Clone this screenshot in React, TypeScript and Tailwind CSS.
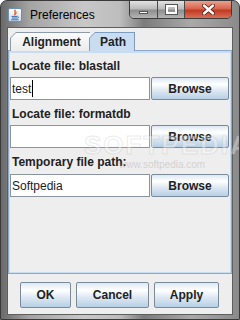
import React from "react";

const font = { fontFamily: '"Liberation Sans", Arial, sans-serif' };

function JavaIcon() {
  return (
    <svg width="14" height="14" viewBox="0 0 14 14">
      <defs>
        <linearGradient id="jg" x1="0" y1="0" x2="0" y2="1">
          <stop offset="0" stopColor="#ffffff" />
          <stop offset="1" stopColor="#c9dcef" />
        </linearGradient>
      </defs>
      <rect x="0.5" y="0.5" width="13" height="13" rx="1.5" fill="url(#jg)" stroke="#6f8fb3" />
      <path d="M7.5 1.8 C5.2 3.6 9.2 4.6 6.4 7.2" stroke="#e0542a" strokeWidth="1.4" fill="none" />
      <path d="M9 3.4 C8 4.4 9.4 5 8.2 6.3" stroke="#f08a3a" strokeWidth="1" fill="none" />
      <path d="M3.5 8.4 h6" stroke="#3d6fa6" strokeWidth="1" />
      <path d="M4 10 h5" stroke="#3d6fa6" strokeWidth="1" />
      <path d="M3 11.8 h7.5" stroke="#3d6fa6" strokeWidth="1" />
      <path d="M9.6 8.3 q2 .6 -.2 2.2" stroke="#3d6fa6" strokeWidth="1" fill="none" />
    </svg>
  );
}

function Btn({ w, children }: { w: string; children: React.ReactNode }) {
  return (
    <div
      className={`${w} h-full flex items-center justify-center border border-[#7a8a99] rounded-[2px] bg-[linear-gradient(to_bottom,#dde8f3_0%,#ffffff_30%,#dde8f3_60%,#b8cfe5_100%)] text-[12px] font-bold text-[#222]`}
    >
      {children}
    </div>
  );
}

function Field({ value, caret }: { value: string; caret?: boolean }) {
  return (
    <div className="flex h-[23px] gap-[1px]">
      <div className="w-[140px] h-full bg-white border border-[#8a94a0] flex items-center pl-[1px] text-[12px] text-[#1a1a2a]">
        <span>{value}</span>
        {caret && <span className="w-[1px] h-[17px] bg-black ml-[1px]" />}
      </div>
      <div className="w-[78px] h-full">
        <Btn w="w-full">Browse</Btn>
      </div>
    </div>
  );
}

export default function App() {
  return (
    <div
      className="w-[240px] h-[320px] flex flex-col border border-[#3a3a3a] rounded-t-[7px] overflow-hidden bg-[linear-gradient(to_right,#6a6a6a_0%,#a4a4a4_12%,#c8c8c8_35%,#bdbdbd_50%,#7c7c7c_60%,#a9a9a9_80%,#8a8a8a_100%)]"
      style={font}
    >
      {/* Title bar */}
      <div className="h-[26px] flex items-start shrink-0">
        <div className="ml-[7px] mt-[7px]">
          <JavaIcon />
        </div>
        <div className="ml-[8px] mt-[7px] text-[12px] leading-[14px] text-black">Preferences</div>
        <div className="ml-auto mr-[7px] flex h-[19px] -mt-px border border-[#3c3c3c] rounded-b-[5px] overflow-hidden">
          <div className="w-[28px] h-full border-r border-[#4a4a4a] bg-[linear-gradient(to_bottom,#e2e2e2_0%,#bcbcbc_45%,#8e8e8e_55%,#b4b4b4_100%)] flex items-center justify-center">
            <div className="w-[9px] h-[3px] bg-white border border-[#555] mt-[5px]" />
          </div>
          <div className="w-[27px] h-full border-r border-[#4a4a4a] bg-[linear-gradient(to_bottom,#e2e2e2_0%,#bcbcbc_45%,#8e8e8e_55%,#b4b4b4_100%)] flex items-center justify-center">
            <div className="w-[11px] h-[9px] border-[2px] border-white outline outline-1 outline-[#555]">
            </div>
          </div>
          <div className="w-[46px] h-full bg-[linear-gradient(to_bottom,#eaa08f_0%,#d8654e_45%,#c23a22_55%,#d8705a_100%)] flex items-center justify-center">
            <svg width="13" height="11" viewBox="0 0 13 11">
              <path d="M2 1.5 L11 9.5 M11 1.5 L2 9.5" stroke="#5a1a10" strokeWidth="4" strokeLinecap="round" />
              <path d="M2 1.5 L11 9.5 M11 1.5 L2 9.5" stroke="#ffffff" strokeWidth="2.4" strokeLinecap="round" />
            </svg>
          </div>
        </div>
      </div>

      {/* Client area */}
      <div className="mx-[6px] h-[288px] border border-[#5e5e5e] bg-[#eeeeee] flex flex-col relative">
        {/* Tab strip */}
        <div className="h-[23px] pt-[4px] pl-[2px] flex items-end relative z-10 -mb-px">
          <div className="relative w-[80px] h-[19px] bg-[#8c9aab] [clip-path:polygon(6px_0,100%_0,100%_100%,0_100%,0_6px)]">
            <div className="absolute left-[1px] top-[1px] right-0 bottom-0 bg-[linear-gradient(to_bottom,#fbfbfb,#ececec)] [clip-path:polygon(5px_0,100%_0,100%_100%,0_100%,0_5px)] flex items-center justify-center pl-[2px]">
              <span className="text-[12px] font-bold text-[#222]">Alignment</span>
            </div>
          </div>
          <div className="relative w-[46px] h-[19px] -ml-px bg-[#7e9cc2] [clip-path:polygon(6px_0,100%_0,100%_100%,0_100%,0_6px)]">
            <div className="absolute left-[1px] top-[1px] right-[1px] bottom-0 bg-[#c8ddf2] [clip-path:polygon(5px_0,100%_0,100%_100%,0_100%,0_5px)] flex items-center justify-center pl-[2px]">
              <span className="text-[12px] font-bold text-[#222]">Path</span>
            </div>
          </div>
        </div>

        {/* Tab panel */}
        <div className="h-[224px] border border-[#8ea8c8] shadow-[inset_0_2px_0_#c8ddf2,inset_0_0_0_1px_#c8ddf2] px-[1px] flex flex-col">
          <div className="mt-[8px] pl-[2px] h-[14px] leading-[14px] text-[12px] font-bold text-[#222]">Locate file: blastall</div>
          <div className="mt-[4px]">
            <Field value="test" caret />
          </div>
          <div className="mt-[7px] pl-[2px] h-[14px] leading-[14px] text-[12px] font-bold text-[#222]">Locate file: formatdb</div>
          <div className="mt-[4px]">
            <Field value="" />
          </div>
          <div className="mt-[7px] pl-[2px] h-[14px] leading-[14px] text-[12px] font-bold text-[#222]">Temporary file path:</div>
          <div className="mt-[5px]">
            <Field value="Softpedia" />
          </div>
        </div>

        {/* Buttons */}
        <div className="flex justify-center gap-[5px] pt-[8px] h-[34px] pr-[1px]">
          <Btn w="w-[51px]">OK</Btn>
          <Btn w="w-[73px]">Cancel</Btn>
          <Btn w="w-[65px]">Apply</Btn>
        </div>

        {/* watermark */}
        <div className="absolute left-[76px] top-[98px] text-[26px] font-bold tracking-[2px] text-[rgba(255,255,255,0.35)] [-webkit-text-stroke:1px_rgba(170,170,170,0.25)] pointer-events-none">
          SOFTPEDIA
        </div>
        <div className="absolute left-[111px] top-[129px] text-[10px] text-[rgba(150,150,150,0.35)] pointer-events-none">
          www.softpedia.com
        </div>
      </div>
    </div>
  );
}
